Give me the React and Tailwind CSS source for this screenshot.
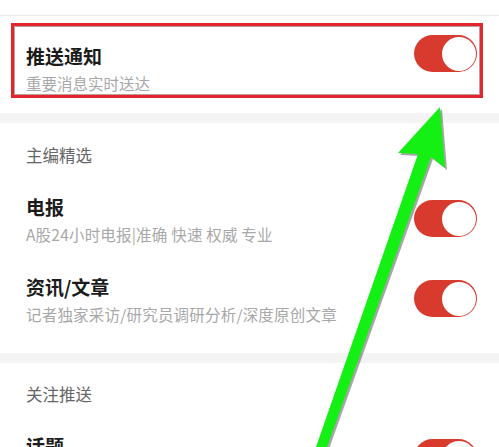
import React from 'react';

const Toggle = ({ className = '' }) => (
  <div className={`w-[63px] h-[37px] rounded-full bg-[#d83a2e] flex items-center justify-end p-[1.5px] shrink-0 ${className}`}>
    <div className="w-[34px] h-[34px] rounded-full bg-white" />
  </div>
);

const SettingRow = ({ title, subtitle }) => (
  <div className="h-[80px] flex items-start justify-between pl-[26px] pr-[22px]">
    <div className="pt-[10px]">
      <div className="text-[19px] leading-[24px] font-semibold text-[#1b1b1b]">{title}</div>
      {subtitle && (
        <div className="mt-[5px] text-[15.5px] leading-[20px] text-[#a8a8a8] whitespace-nowrap tracking-[0.2px]">{subtitle}</div>
      )}
    </div>
    <Toggle className="mt-[15px]" />
  </div>
);

export default function App() {
  return (
    <div className="relative w-[499px] h-[447px] overflow-hidden bg-white font-['Noto_Sans_CJK_SC','Noto_Sans',sans-serif]">
      {/* top strip */}
      <div className="h-[15px] bg-white" />
      <div className="h-px bg-[#e9e9e9]" />

      {/* push notification */}
      <div className="h-[97px] flex items-start justify-between pl-[26px] pr-[22px]">
        <div className="pt-[28px]">
          <div className="text-[19px] leading-[24px] font-semibold text-[#1b1b1b]">推送通知</div>
          <div className="mt-[5px] text-[15.5px] leading-[20px] text-[#a8a8a8]">重要消息实时送达</div>
        </div>
        <Toggle className="mt-[19px]" />
      </div>

      <div className="h-[10px] bg-[#f4f4f4]" />

      {/* editor picks */}
      <div className="h-[62px] pl-[26px] pt-[21px]">
        <div className="text-[16.5px] leading-[22px] text-[#666]">主编精选</div>
      </div>
      <SettingRow title="电报" subtitle="A股24小时电报|准确 快速 权威 专业" />
      <SettingRow title="资讯/文章" subtitle="记者独家采访/研究员调研分析/深度原创文章" />
      <div className="h-[8px]" />

      <div className="h-[10px] bg-[#f4f4f4]" />

      {/* follow push */}
      <div className="h-[61px] pl-[26px] pt-[20px]">
        <div className="text-[16.5px] leading-[22px] text-[#666]">关注推送</div>
      </div>
      <SettingRow title="话题" />

      {/* annotation: red box */}
      <div className="absolute left-[11px] top-[23px] w-[472px] h-[75px] border-[3px] border-[#e2262c] shadow-[inset_0_0_0_1px_rgba(110,40,40,0.45)] pointer-events-none" />

      {/* annotation: green arrow */}
      <svg className="absolute inset-0 pointer-events-none" width="499" height="447" viewBox="0 0 499 447">
        <polygon
          points="442,109 447,170 433,159 329,449 318,449 420,156 400,155"
          fill="#3a3a3a"
          opacity="0.45"
        />
        <polygon
          points="440,107 445,168 431,157 327,447 316,447 418,154 398,153"
          fill="#14f014"
        />
      </svg>
    </div>
  );
}
